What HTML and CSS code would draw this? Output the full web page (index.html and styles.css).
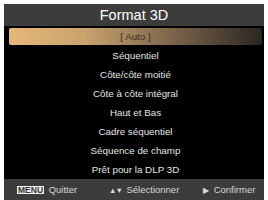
FILE: index.html
```html
<!DOCTYPE html>
<html lang="fr">

<head>
  <meta charset="UTF-8">
  <meta name="viewport" content="width=device-width, initial-scale=1.0">
  <title>Format 3D</title>
  <link rel="stylesheet" href="styles.css">
</head>

<body>
  <div class="panel">
    <div class="title">Format 3D</div>
    <ul class="menu">
      <li class="active">[ Auto ]</li>
      <li>Séquentiel</li>
      <li>Côte/côte moitié</li>
      <li>Côte à côte intégral</li>
      <li>Haut et Bas</li>
      <li>Cadre séquentiel</li>
      <li>Séquence de champ</li>
      <li>Prêt pour la DLP 3D</li>
    </ul>
    <div class="footer">
      <div class="hint"><span class="key">MENU</span> Quitter</div>
      <div class="hint"><span class="arrows">▲▼</span> Sélectionner</div>
      <div class="hint"><span class="play">▶</span> Confirmer</div>
    </div>
  </div>
</body>

</html>
```

FILE: styles.css
```css
body {
  margin: 0;
  padding: 4px 4px 0 4px;
  background: #fff;
  font-family: "Liberation Sans", Arial, sans-serif;
}

.panel {
  width: 260px;
  height: 196px;
  background: #000;
  display: flex;
  flex-direction: column;
}

.title {
  height: 22px;
  line-height: 22px;
  background: #3c3c3c;
  color: #fff;
  text-align: center;
  font-size: 14.5px;
}

.menu {
  list-style: none;
  margin: 0;
  padding: 2px 2px 0 5px;
  flex: 1;
}

.menu li {
  height: 19px;
  line-height: 19px;
  text-align: center;
  color: #e4e4e4;
  font-size: 9.8px;
}

.menu li.active {
  height: 17px;
  line-height: 17px;
  margin-bottom: 1px;
  border-radius: 2px;
  color: #3a2c1c;
  background: linear-gradient(to right, #e6b878 0%, #c9a26e 30%, #7a644a 65%, #2c2622 100%);
}

.footer {
  height: 22px;
  background: #3c3c3c;
  display: flex;
  align-items: center;
  padding: 0 0 0 13px;
  color: #d8d8d8;
  font-size: 9.5px;
}

.hint:nth-child(1) {
  width: 92px;
}

.hint:nth-child(2) {
  width: 94px;
}

.key {
  display: inline-block;
  background: #f0f0f0;
  color: #333;
  font-weight: bold;
  font-size: 8.5px;
  line-height: 8px;
  padding: 0 1px;
  margin-right: 2px;
}

.arrows {
  font-size: 7.5px;
  letter-spacing: -1px;
  margin-right: 2px;
}

.play {
  font-size: 7.5px;
  margin-right: 2px;
}
```
